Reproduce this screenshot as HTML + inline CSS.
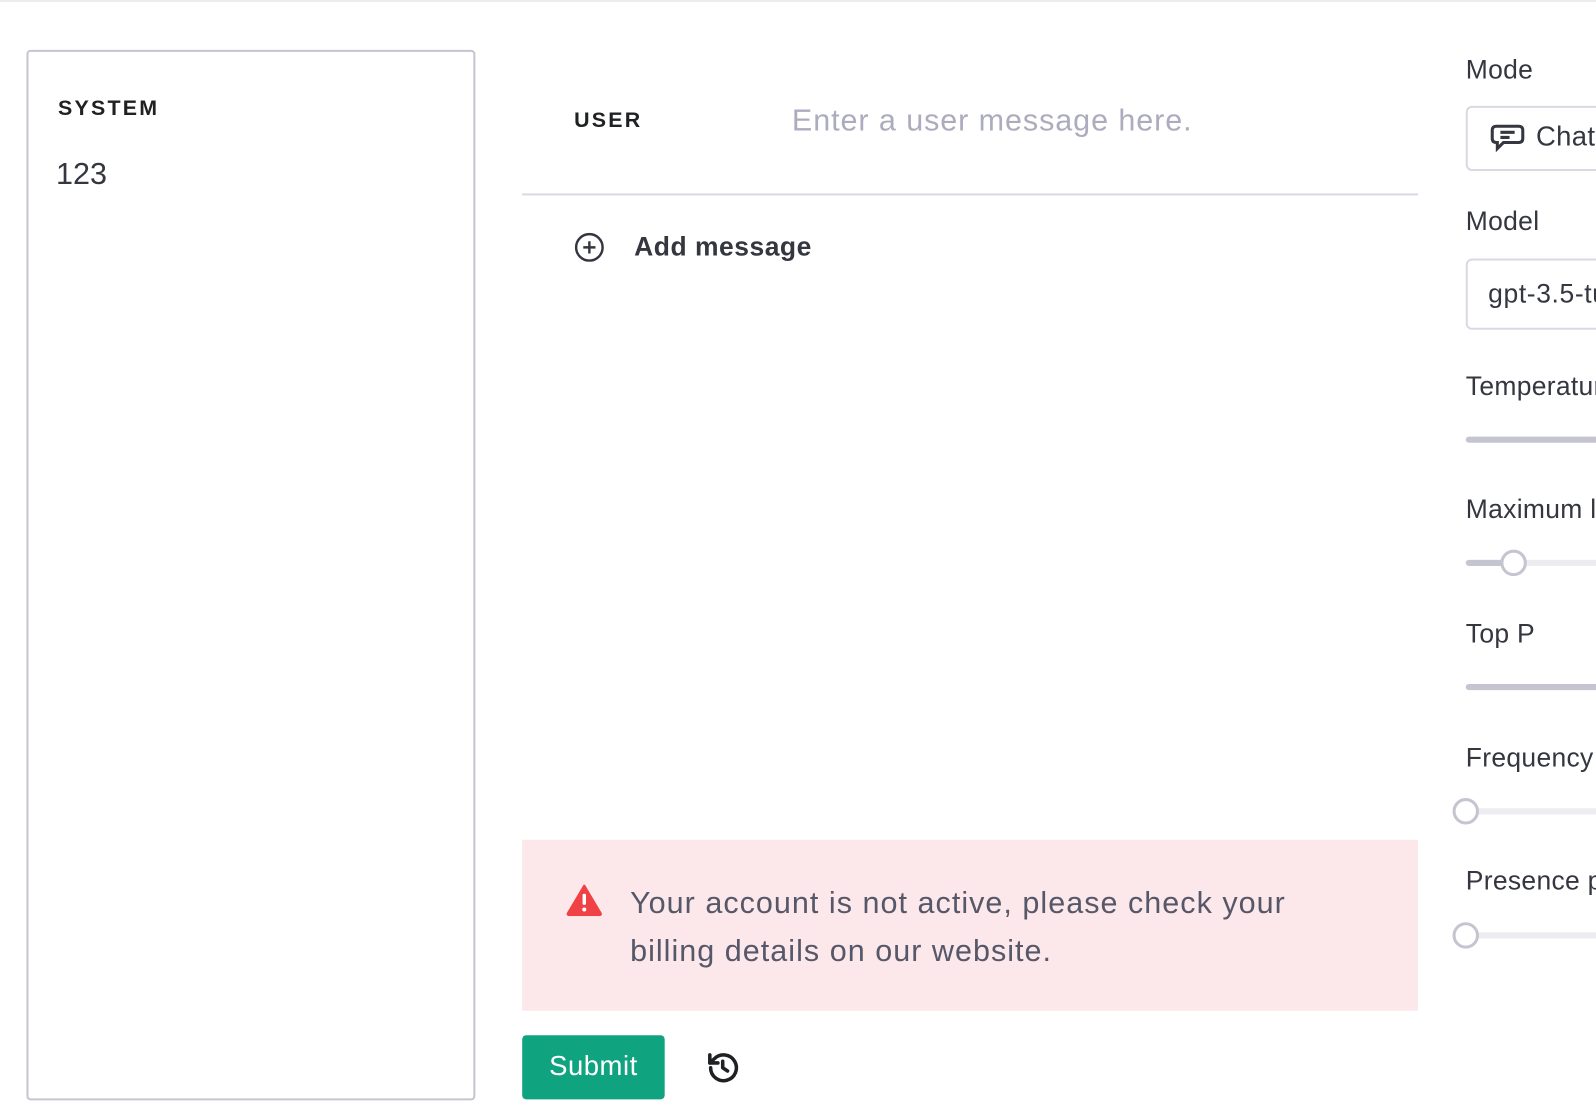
<!DOCTYPE html><html><head><style>
body{margin:0;width:1596px;height:1114px;overflow:hidden;background:#fff;font-family:"Liberation Sans",sans-serif;color:#353740;position:relative}
#w{position:absolute;left:0;top:0;width:1568px;height:1094px;overflow:hidden;transform:scale(1.0179);transform-origin:0 0}
.a{position:absolute;white-space:nowrap}
.lbl{font-size:26px;color:#353740;letter-spacing:0.3px}
.track{position:absolute;height:6px;border-radius:3px;background:#ececf1;left:1440px;width:200px}
.knob{position:absolute;width:20px;height:20px;border:3px solid #c5c5d2;border-radius:50%;background:#fff}
</style></head><body><div id="w">
<div class="a" style="left:0;top:0;width:1568px;height:2px;background:#ececf1"></div>
<div class="a" style="left:26px;top:49px;width:437px;height:1028px;border:2px solid #c5c5d2;border-radius:4px"></div>
<div class="a" style="left:57px;top:95px;font-size:21px;font-weight:bold;letter-spacing:2.2px;color:#202123">SYSTEM</div>
<div class="a" style="left:55px;top:155px;font-size:30px;color:#353740">123</div>
<div class="a" style="left:564px;top:107px;font-size:21px;font-weight:bold;letter-spacing:2.2px;color:#202123">USER</div>
<div class="a" style="left:778px;top:102px;font-size:30px;color:#acacbe;letter-spacing:0.9px">Enter a user message here.</div>
<div class="a" style="left:513px;top:190px;width:880px;height:2px;background:#d9d9e3"></div>
<svg class="a" style="left:563px;top:227px" width="32" height="32" viewBox="0 0 32 32" fill="none" stroke="#353740" stroke-width="2.4"><circle cx="16" cy="16" r="13"/><path d="M16 10v12M10 16h12"/></svg>
<div class="a" style="left:623px;top:227px;font-size:26px;font-weight:bold;color:#353740;letter-spacing:0.5px">Add message</div>
<div class="a" style="left:513px;top:825px;width:880px;height:168px;background:#fce8ea"></div>
<svg class="a" style="left:556px;top:868px" width="36" height="32" viewBox="0 0 36 32"><path d="M18 2 L34 29 Q35 31 33 31 H3 Q1 31 2 29 Z" fill="#ef4146" stroke="#ef4146" stroke-linejoin="round" stroke-width="2"/><rect x="16.3" y="10" width="3.4" height="11" rx="1.5" fill="#fff"/><circle cx="18" cy="25.5" r="2" fill="#fff"/></svg>
<div class="a" style="left:619px;top:864px;font-size:30px;line-height:47px;color:#565869;letter-spacing:1px">Your account is not active, please check your<br>billing details on our website.</div>
<div class="a" style="left:513px;top:1017px;width:140px;height:63px;background:#10a37f;border-radius:4px;color:#fff;font-size:27px;line-height:61px;text-align:center;letter-spacing:0.5px">Submit</div>
<svg class="a" style="left:691px;top:1030px" width="38" height="38" viewBox="0 0 24 24" fill="none" stroke="#202123" stroke-width="2.2" stroke-linecap="round" stroke-linejoin="round"><path d="M4.5 12a8 8 0 1 0 2.3-5.6L4 9"/><path d="M4 4v5h5"/><path d="M12 8v4l3 2"/></svg>
<div class="a lbl" style="left:1440px;top:53px">Mode</div>
<div class="a" style="left:1440px;top:104px;width:200px;height:60px;border:2px solid #d9d9e3;border-radius:6px"></div>
<svg class="a" style="left:1464px;top:121px" width="34" height="30" viewBox="0 0 34 30" fill="none" stroke="#353740" stroke-width="3"><path d="M6 3h22q4 0 4 4v8q0 4-4 4H13l-6 6v-6H6q-4 0-4-4V7q0-4 4-4z"/><path d="M10 9h14M10 14h9"/></svg>
<div class="a lbl" style="left:1509px;top:119px;font-size:27px">Chat</div>
<div class="a lbl" style="left:1440px;top:202px">Model</div>
<div class="a" style="left:1440px;top:254px;width:200px;height:66px;border:2px solid #d9d9e3;border-radius:6px"></div>
<div class="a lbl" style="left:1462px;top:273px;font-size:26px;letter-spacing:0.6px">gpt-3.5-turbo</div>
<div class="a lbl" style="left:1440px;top:364px">Temperature</div>
<div class="track" style="top:429px;background:#c5c5d2"></div>
<div class="a lbl" style="left:1440px;top:485px">Maximum length</div>
<div class="track" style="top:550px"></div>
<div class="a" style="left:1440px;top:550px;width:46px;height:6px;background:#c5c5d2;border-radius:3px"></div>
<div class="knob" style="left:1474px;top:540px"></div>
<div class="a lbl" style="left:1440px;top:607px">Top P</div>
<div class="track" style="top:672px;background:#c5c5d2"></div>
<div class="a lbl" style="left:1440px;top:729px">Frequency penalty</div>
<div class="track" style="top:794px"></div>
<div class="knob" style="left:1427px;top:784px"></div>
<div class="a lbl" style="left:1440px;top:850px">Presence penalty</div>
<div class="track" style="top:916px"></div>
<div class="knob" style="left:1427px;top:906px"></div>
</div></body></html>
